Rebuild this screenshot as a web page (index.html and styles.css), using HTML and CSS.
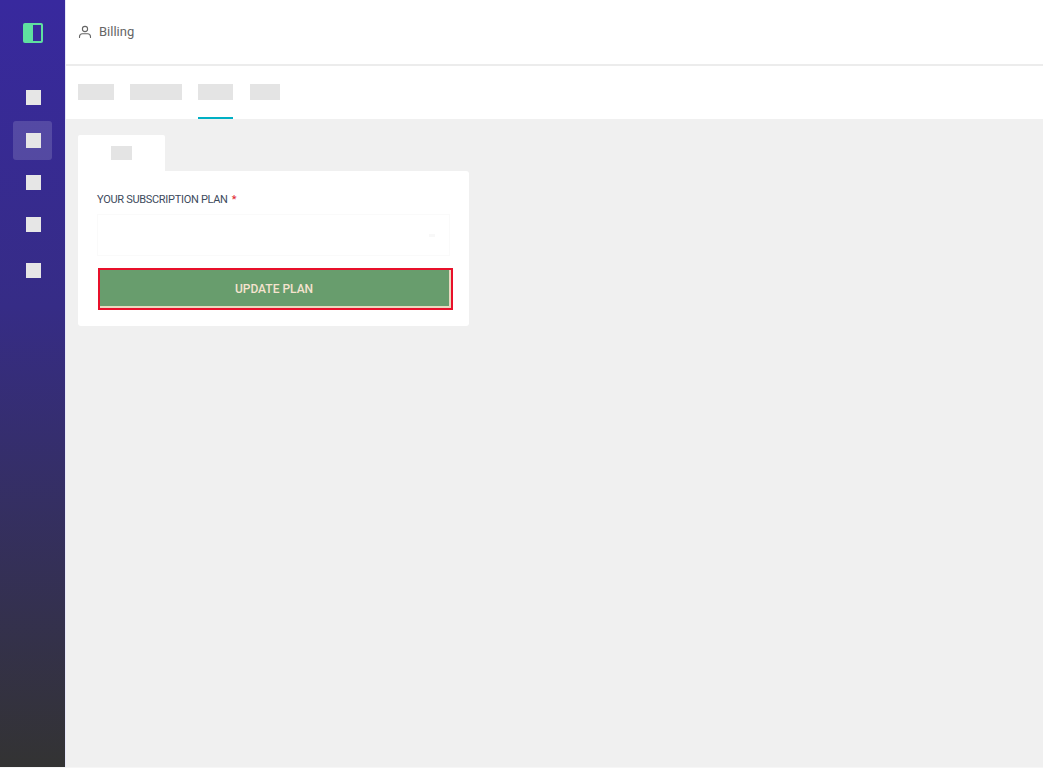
FILE: index.html
```html
<!DOCTYPE html>
<html lang="en">
<head>
<meta charset="utf-8">
<title>Billing</title>
<link rel="stylesheet" href="styles.css">
</head>
<body>
<div class="app">
  <aside class="sidebar">
    <div class="logo-row">
      <svg class="logo" width="20" height="20" viewBox="0 0 20 20" aria-hidden="true">
        <rect x="0" y="0" width="20" height="20" rx="2" fill="#5fe0a0"/>
        <rect x="10" y="2" width="8" height="16" fill="#3a2a9c"/>
      </svg>
    </div>
    <nav class="side-nav">
      <div class="side-item side-item-first"><span class="side-square"></span></div>
      <div class="side-item side-item-active"><span class="side-square"></span></div>
      <div class="side-item"><span class="side-square"></span></div>
      <div class="side-item"><span class="side-square"></span></div>
      <div class="side-item side-item-last"><span class="side-square"></span></div>
    </nav>
  </aside>
  <main class="main">
    <header class="topbar">
      <svg class="user-icon" width="14" height="14" viewBox="0 0 14 14" fill="none" stroke="#666" stroke-width="1.1" aria-hidden="true">
        <circle cx="7" cy="4" r="2.6"/>
        <path d="M1.500 12.500v-.8c0-1.800 1.400-3 3-3h5c1.600 0 3 1.200 3 3v.8" stroke-linecap="round"/>
      </svg>
      <span class="page-title">Billing</span>
    </header>
    <div class="subnav">
      <div class="subnav-tab"><span class="ph ph-a"></span></div>
      <div class="subnav-tab"><span class="ph ph-b"></span></div>
      <div class="subnav-tab subnav-tab-active"><span class="ph ph-c"></span></div>
      <div class="subnav-tab subnav-tab-last"><span class="ph ph-d"></span></div>
    </div>
    <section class="content">
      <div class="panel-tab"><span class="ph ph-e"></span></div>
      <div class="card">
        <label class="field-label">YOUR SUBSCRIPTION PLAN<span class="req">*</span></label>
        <div class="select"><span class="caret"></span></div>
        <button class="update-btn" type="button">UPDATE PLAN</button>
      </div>
    </section>
  </main>
</div>
</body>
</html>
```
FILE: styles.css
```css
* { box-sizing: border-box; }
html, body { margin: 0; height: 100%; }
body { font-family: Roboto, "Noto Sans", sans-serif; background: #f6f6f6; overflow: hidden; }
.app { display: flex; height: 767px; }

.sidebar {
  width: 66px;
  flex: none;
  border-right: 1px solid #e6e6f8;
  background: linear-gradient(180deg, #38299e 0%, #362c86 40%, #333333 100%);
  display: flex;
  flex-direction: column;
  align-items: center;
}
.logo-row { height: 65px; display: flex; align-items: center; justify-content: center; }
.logo { display: block; margin-left: 1px; }
.side-nav { display: flex; flex-direction: column; align-items: center; margin-top: 13px; gap: 3px; }
.side-item { width: 39px; height: 39px; padding-left: 1px; border-radius: 3px; display: flex; align-items: center; justify-content: center; }
.side-item-first { margin-bottom: 1px; }
.side-item-active { background: rgba(255,255,255,.15); }
.side-item-last { margin-top: 4px; }
.side-square { width: 15px; height: 15px; background: #e6e6e6; display: block; }

.main { flex: 1; min-width: 0; display: flex; flex-direction: column; }
.topbar { height: 66px; background: #fff; border-bottom: 2px solid #ececec; display: flex; align-items: center; padding: 0 0 0 12px; gap: 7px; }
.user-icon { display: block; }
.page-title { font-size: 13px; color: #666; line-height: 18px; }

.subnav { height: 53px; background: #fff; display: flex; gap: 16px; padding-left: 12px; }
.subnav-tab { padding-top: 18px; height: 53px; }
.subnav-tab-active { border-bottom: 2px solid #00b0c4; }
.subnav-tab-last { margin-left: 1px; }
.ph { display: block; height: 16px; background: #e4e4e4; }
.ph-a { width: 36px; }
.ph-b { width: 52px; }
.ph-c { width: 35px; }
.ph-d { width: 30px; }
.ph-e { width: 21px; height: 14px; }

.content { flex: 1; padding: 16px 0 0 12px; background: #f0f0f0; }
.panel-tab { width: 87px; height: 36px; background: #fff; border-radius: 2px 2px 0 0; padding: 11px 0 0 33px; }
.card { width: 391px; height: 155px; background: #fff; border-radius: 0 3px 3px 3px; padding: 20px 17px 0 19px; display: flex; flex-direction: column; }
.field-label { font-size: 11px; letter-spacing: -.3px; line-height: 18px; color: #3d4a5c; }
.req { color: #e0202a; margin-left: 4px; }
.select { width: 353px; height: 42px; margin-top: 5px; border: 1px solid #fafafa; position: relative; }
.caret { position: absolute; right: 14px; top: 19px; width: 6px; height: 3px; background: #f8f8f8; }
.update-btn {
  width: 355px;
  height: 42px;
  margin: 12px 0 0 1px;
  background: #689d6d;
  color: #f5e3cf;
  font: 500 12px/18px Roboto, "Noto Sans", sans-serif;
  border: 2px solid #e8102a;
  box-shadow: inset -2px -2px 0 #e9d9c0, inset 0 0 0 1px #689d6d;
  padding: 0 3px 0 0;
}
```
